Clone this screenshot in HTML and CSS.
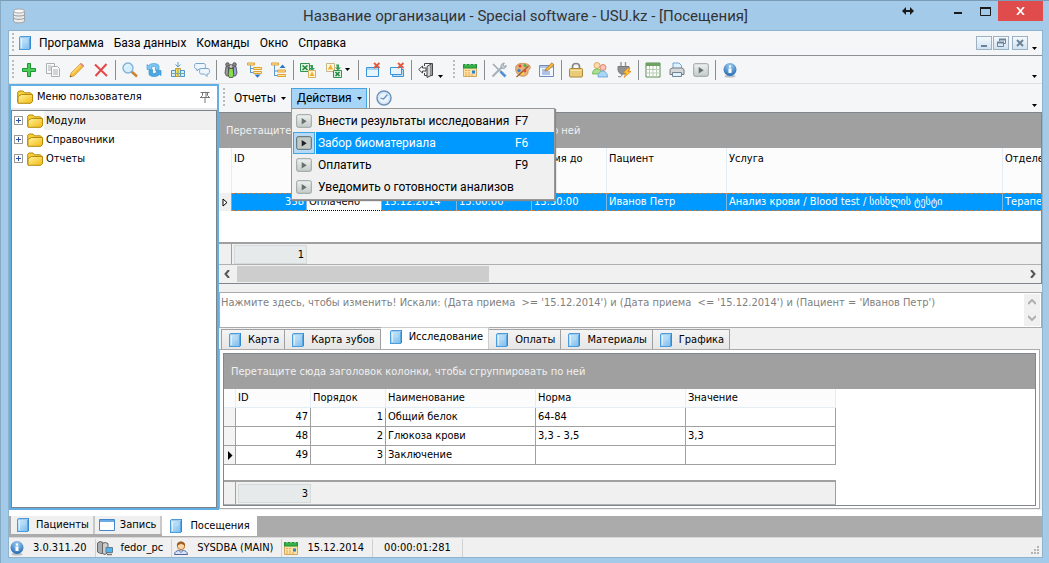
FILE: index.html
```html
<!DOCTYPE html>
<html lang="ru">
<head>
<meta charset="utf-8">
<title>Название организации - Special software - USU.kz - [Посещения]</title>
<link rel="stylesheet" href="styles.css">
</head>
<body>
<svg class="sprite" aria-hidden="true">
  <defs>
    <linearGradient id="gBook" x1="0" y1="0" x2="1" y2="1"><stop offset="0" stop-color="#d3ecfc"/><stop offset="1" stop-color="#7dbdee"/></linearGradient>
    <linearGradient id="gFold" x1="0" y1="0" x2="1" y2="1"><stop offset="0" stop-color="#fff3a0"/><stop offset="1" stop-color="#f2b90d"/></linearGradient>
    <linearGradient id="gPlay" x1="0" y1="0" x2="0" y2="1"><stop offset="0" stop-color="#eef1f0"/><stop offset="1" stop-color="#c3cbc9"/></linearGradient>
    <radialGradient id="gInfo" cx=".5" cy=".25" r=".8"><stop offset="0" stop-color="#9fd0f5"/><stop offset="1" stop-color="#1a62ad"/></radialGradient>
  </defs>
  <symbol id="book" viewBox="0 0 16 16"><path d="M2 2.500 3.500 1H14v12.500L12.500 15H2z" fill="#3488cf"/><path d="M2 3h10.500v11H2z" fill="url(#gBook)"/><path d="M3 2.300h10" stroke="#b9dff8"/><path d="M12.500 3v11" stroke="#5aa9e2"/><path d="M2.500 3v11.500h10" stroke="#4b9ddd" fill="none"/><path d="M4.500 4v9" stroke="#f0f9ff" opacity=".7"/><path d="M6 5h4v3H6z" fill="#b3dbf6"/></symbol>
  <symbol id="folder" viewBox="0 0 16 16"><path d="M.7 13.500V3.200L2 2h4l1.500 1.800h6l.8 1v2" fill="#f7cf3a" stroke="#b78a0a"/><path d="M1 14.300V7.500L4.500 5.500h11v7l-1.800 1.800z" fill="url(#gFold)" stroke="#b78a0a"/></symbol>
  <symbol id="play" viewBox="0 0 16 16"><rect x=".7" y="1.700" width="14.600" height="12.600" rx="1.500" fill="url(#gPlay)" stroke="#98a3a1"/><path d="M5.700 5v6.500l5-3.250z" fill="#66706e"/></symbol>
  <symbol id="playhot" viewBox="0 0 16 16"><rect x=".7" y="1.700" width="14.600" height="12.600" rx="1.500" fill="#c3cbc9" stroke="#5d6866"/><path d="M5.700 5v6.500l5-3.250z" fill="#222"/></symbol>
  <symbol id="info" viewBox="0 0 16 16"><ellipse cx="8" cy="14.300" rx="5.500" ry="1.300" fill="#b6bec6"/><circle cx="8" cy="7.500" r="6.500" fill="url(#gInfo)"/><path d="M6.500 6.500h3V11h-3zM7 3.500h2v2H7z" fill="#fff"/></symbol>
  <symbol id="cal" viewBox="0 0 16 16"><path d="M1.500 5h13v9.500h-13z" fill="#fbe3a4" stroke="#cfa85c"/><path d="M1.500 2.500h13V6h-13z" fill="#35b34a" stroke="#1f8a33"/><path d="M4 1v2M8 1v2M12 1v2" stroke="#e8f5e9"/><path d="M3 8.500h6M3 11h6M3 13h9" stroke="#f0a45c" stroke-dasharray="2 1"/><rect x="10" y="8.500" width="3" height="3" fill="#2f7fd0"/></symbol>
  <symbol id="db" viewBox="0 0 16 16"><path d="M2.500 3v10c0 2.500 11 2.500 11 0V3" fill="#ececec" stroke="#a3a3a3"/><ellipse cx="8" cy="3" rx="5.500" ry="2" fill="#fafafa" stroke="#aaa"/><path d="M2.500 6.500c0 2 11 2 11 0M2.500 9.800c0 2 11 2 11 0" fill="none" stroke="#999"/></symbol>
  <symbol id="add" viewBox="0 0 16 16"><path d="M6.500 1.500h3v5h5v3h-5v5h-3v-5h-5v-3h5z" fill="#4ccb5c" stroke="#1d9930"/></symbol>
  <symbol id="copy" viewBox="0 0 16 16"><g fill="#fafafa" stroke="#a9b0b0"><path d="M1.500 1.500h8v10h-8z"/><path d="M6.500 4.500h6l2 2v8h-8z"/></g><path d="M3 4h3M3 6h3M3 8h3M8 8h5M8 10h5M8 12h5" stroke="#a9b0b0"/></symbol>
  <symbol id="pen" viewBox="0 0 16 16"><path d="m1 15 1.200-4L12 1.200l2.800 2.800L5 13.800z" fill="#f9c13d" stroke="#cd8a20" stroke-width=".8"/><path d="m3 11.500 9.500-9.500" stroke="#ffe9a0"/><path d="m11 2.200 2.800 2.800 1.200-1.200L12.200 1z" fill="#e58a8a"/><path d="m1 15 1.500-.4-1-1z" fill="#333"/></symbol>
  <symbol id="del" viewBox="0 0 16 16"><path d="m2 2.500 12 11.500M13.500 2 2.500 14" stroke="#e54848" stroke-width="2" fill="none"/></symbol>
  <symbol id="find" viewBox="0 0 16 16"><path d="m9.500 9.500 5.500 5" stroke="#c98436" stroke-width="2.600"/><circle cx="6" cy="6" r="5" fill="#d4eefd" stroke="#7db4d8" stroke-width="1.400"/><path d="M3 5.500C3.500 3.500 5 3 6.500 3" stroke="#fff" fill="none"/></symbol>
  <symbol id="refresh" viewBox="0 0 16 16"><path d="M1 7.500V2.500l1.500 1C5 .8 11 .8 13 3.500V8h-3.500V5C8 4 6.500 4.500 5 6l1.500 1.500z" fill="#7cc3ee" stroke="#4ba3dc" stroke-width=".7"/><path d="M15 8.500v5l-1.500-1C11 15.200 5 15.200 3 12.500V8h3.500v3c1.500 1 3 .5 4.500-1L9.500 8.500z" fill="#4aa8e4" stroke="#3a93d0" stroke-width=".7"/></symbol>
  <symbol id="filter" viewBox="0 0 16 16"><path d="M8 0v4M5.500 2.500 8 5l2.500-2.500" stroke="#5b9bd0" fill="none"/><path d="M5.500 6.500h5v8h-5z" stroke="#c9992c" fill="#fbe04a"/><g stroke="#4c94cf" fill="#d9edfb"><path d="M1.500 8.500h4v6h-4zM10.500 8.500h4v6h-4z"/></g><path d="M1 11.500h14M8 6.500v8" stroke="#7fa6a0"/></symbol>
  <symbol id="chat" viewBox="0 0 16 16"><g fill="#eef6fd" stroke="#7ba6cc"><path d="M2 1.500h8c2 0 2 5.500 0 5.500H5L3 9V7H2C0 7 0 1.500 2 1.500z"/><path d="M7 6.500h7c2 0 2 5.500 0 5.500h-1v2.500L10.500 12H7c-2 0-2-5.500 0-5.500z"/></g></symbol>
  <symbol id="people" viewBox="0 0 16 16"><g stroke="#444" stroke-width=".8"><path d="M3 4.500 2 11l1.500 3h2V5z" fill="#9a9a9a"/><path d="M13 4.500 14 11l-1.500 3h-2V5z" fill="#9a9fe0"/><path d="M6 6.500h4l.8 6-1 3H6.200l-1-3z" fill="#8ade45"/><circle cx="4.500" cy="2.500" r="1.800" fill="#888"/><circle cx="11.500" cy="2.500" r="1.800" fill="#888"/><circle cx="8" cy="4.500" r="1.900" fill="#d0d0d0"/></g></symbol>
  <symbol id="treedn" viewBox="0 0 16 16"><path d="M3.500 3v8M4 6.500h3M4 10.500h3" stroke="#5b9bd0" fill="none"/><g fill="#fde7a5" stroke="#e0a030"><path d="M.5 1h7v2h-7zM6.500 5.500h8v2h-8zM6.500 9.500h8v2h-8z"/></g><path d="M7.500 12.500h6L10.500 15.700z" fill="#2b76c9"/></symbol>
  <symbol id="treeup" viewBox="0 0 16 16"><path d="M3.500 3v11M4 9h3M4 13.500h3" stroke="#5b9bd0" fill="none"/><g fill="#fde7a5" stroke="#e0a030"><path d="M.5 1h7v2h-7zM6.500 8h8v2h-8zM6.500 12.500h8v2h-8z"/></g><path d="M8.500 6h6l-3-3.500z" fill="#2b76c9"/></symbol>
  <symbol id="xls" viewBox="0 0 16 16"><path d="M.5 1.500h9v8h-9z" fill="#dff2df" stroke="#2f9650"/><path d="m2.500 3.500 5 4.500M7.500 3.500l-5 4.500" stroke="#23863f" stroke-width="1.600"/><path d="M10 3h3v3h2l-3 3-3-3h2z" fill="#35a052"/><path d="M8.500 8.500h7v7h-7z" fill="#fff8de" stroke="#d6b35c"/><path d="m12 9.500 2.500 4.500h-5z" fill="#f5ad2d"/></symbol>
  <symbol id="xls2" viewBox="0 0 16 16"><path d="M.5 1.500h8v8h-8z" fill="#fff8de" stroke="#c6b58c"/><path d="m4.500 2.500 2.800 5H1.700z" fill="#f5ad2d"/><path d="M10 2.500h3v3h2l-3 3-3-3h2z" fill="#35a052"/><path d="M7.500 8.500h8v7h-8z" fill="#dff2df" stroke="#2f9650"/><path d="m9.500 10 4 4M13.500 10l-4 4" stroke="#23863f" stroke-width="1.600"/></symbol>
  <symbol id="winx" viewBox="0 0 16 16"><path d="M1.500 5.500h12v9h-12z" fill="#e6f4fe" stroke="#3b93d8"/><path d="M2 6h11v2H2z" fill="#a9d5f5"/><path d="m9 1 5.500 5M14.500 1 9 6" stroke="#e2593d" stroke-width="1.800"/></symbol>
  <symbol id="winsx" viewBox="0 0 16 16"><path d="M3.500 7.500h11v7h-11z" fill="#bcdff7" stroke="#3b93d8"/><path d="M1.500 5.500h11v7h-11z" fill="#e6f4fe" stroke="#3b93d8"/><path d="m9 1 5.500 5M14.500 1 9 6" stroke="#e2593d" stroke-width="1.800"/></symbol>
  <symbol id="exit" viewBox="0 0 16 16"><path d="M6.500 4V1.500h8v12H12M6.500 11v2.500H9" fill="none" stroke="#444"/><path d="m9 4.500 4-2.500v11.500L9 15.500z" fill="#d5d5d5" stroke="#444"/><path d="M.7 7.500 4.500 4v2h3.500v3H4.500v2z" fill="#fff" stroke="#444"/></symbol>
  <symbol id="tools" viewBox="0 0 16 16"><path d="M2 2l8 8" stroke="#98a4ad" stroke-width="1.500"/><path d="m9.500 9.500 5 5" stroke="#4f93d3" stroke-width="2.600"/><path d="m1.500 14.500 9-9" stroke="#a5afb6" stroke-width="2"/><path d="M10 5.500c-.5-3 1.500-4.500 3.500-4.500l-1.500 2 1 1.300 2.300-.8C15.500 6 13 7 11 6.300z" fill="#c6ced4" stroke="#87929a" stroke-width=".7"/></symbol>
  <symbol id="palette" viewBox="0 0 16 16"><path d="M1 4c3-4 12-3 14 0 1 4-2 3-2 6s-3 5-7 4c-5-1-6-7-5-10z" fill="#e9b27a" stroke="#cf975e"/><circle cx="5" cy="4" r="1.600" fill="#db4b3b"/><circle cx="10" cy="3.500" r="1.500" fill="#4eae50"/><circle cx="4" cy="8.500" r="1.700" fill="#3f86d9"/><circle cx="7.500" cy="11.500" r="1.600" fill="#f2d43a"/><path d="m1.500 15 12-11" stroke="#9a6034" stroke-width="1.300"/><circle cx="10" cy="9" r="1.400" fill="#e14f39"/></symbol>
  <symbol id="formedit" viewBox="0 0 16 16"><path d="M.5 3.500h14v11H.5z" fill="#f2f7fd" stroke="#7389c0"/><path d="M1 4h13v2H1z" fill="#b3c6ea"/><path d="M3 8h4M3 10h8M3 12h8" stroke="#6d8fd0"/><path d="m6 9 1-2.500L13 .8l2 2-6 5.500z" fill="#f5b63a" stroke="#a06d1c" stroke-width=".7"/></symbol>
  <symbol id="lock" viewBox="0 0 16 16"><path d="M4.500 7V4.500c0-4 7-4 7 0V7" fill="none" stroke="#878787" stroke-width="1.700"/><rect x="1.500" y="6.500" width="13" height="8.500" rx="1" fill="#ebcb77" stroke="#ad883a"/><path d="M2.500 8.500h11" stroke="#f9e8ae"/></symbol>
  <symbol id="users" viewBox="0 0 16 16"><g stroke-width=".8"><circle cx="5" cy="3.500" r="3" fill="#fbdcae" stroke="#dc9a4e"/><path d="M.5 12c0-7 9-7 9 0z" fill="#a8e08e" stroke="#66b34b"/><circle cx="11" cy="5.500" r="3" fill="#f7c6b8" stroke="#dc6d52"/><path d="M6 15c0-8 9.500-8 9.500 0z" fill="#a9d6f7" stroke="#5c9fd6"/></g></symbol>
  <symbol id="plug" viewBox="0 0 16 16"><path d="M5 0v5M9.500 0v5" stroke="#999" stroke-width="1.400"/><path d="M2 4.500h11v3c0 4-3 4.500-4.500 4.500H6C4 12 2 10 2 7.500z" fill="#909090" stroke="#777"/><path d="M6 12c0 3-2 3-4 2.500" stroke="#777" fill="none"/><path d="m12 6-5 5h3l-2 4.500L15 9.500h-3l2-3.500z" fill="#ffc42e" stroke="#e1841c" stroke-width=".7"/></symbol>
  <symbol id="table" viewBox="0 0 16 16"><path d="M1 1h14v14H1z" fill="#fff" stroke="#5d8a55"/><path d="M1 1h14v3H1z" fill="#6da262"/><path d="M1 7.500h14M1 11h14M4.500 4v11M8 4v11M11.500 4v11" stroke="#b6cdb2"/></symbol>
  <symbol id="print" viewBox="0 0 16 16"><path d="M4 7V1h6l2.500 2.500V7" fill="#e0f0fd" stroke="#6ea6d5"/><path d="M1 7.500 3 6h10l2 1.500v5H1z" fill="#d5d8da" stroke="#74797d"/><path d="M3.500 10.500h9v4h-9z" fill="#e0f0fd" stroke="#72848f"/></symbol>
  <symbol id="gauge" viewBox="0 0 16 16"><circle cx="8" cy="8" r="7" fill="#eaf3fa" stroke="#6d93bb" stroke-width="1.500"/><path d="m4.500 8 3 1L11.500 4.500" fill="none" stroke="#5c8fc4" stroke-width="1.200"/><circle cx="8" cy="8" r="5.300" fill="none" stroke="#bdd4e9" stroke-width=".7"/></symbol>
  <symbol id="pin" viewBox="0 0 12 12"><path d="M1.500 1.500h9M3.500 1.500v3l-2 2M8.500 1.500v3l2 2M7 1.500v5M1 6.500h10M6 7v5" fill="none" stroke="#777"/></symbol>
  <symbol id="window" viewBox="0 0 16 16"><path d="M.5 2.500h15v11H.5z" fill="#fff" stroke="#4387ca"/><path d="M1 3h14v2H1z" fill="#6cabe2"/></symbol>
  <symbol id="server" viewBox="0 0 16 16"><path d="M.5 3 3 1.500l3 1v11L3.500 13.500.5 12z" fill="#a9adb0" stroke="#666"/><path d="M5.500 3.500 8 2.500l3 1v9l-3 2-2.500-1z" fill="#c9cdd0" stroke="#666"/><path d="M9 7.500h6.500v5H9z" fill="#4fb4ee" stroke="#5f7d92"/><path d="M10 14.500h5" stroke="#777" stroke-width="1.500"/></symbol>
  <symbol id="user" viewBox="0 0 16 16"><path d="M1.500 14.500c0-3 3-4 4-4h5c1 0 4 1 4 4z" fill="#d8e3f8" stroke="#50659c"/><circle cx="8" cy="6" r="3.700" fill="#fbd6a4" stroke="#b8793a"/><path d="M4 6C3 0 13 0 12 6c-1-2-3-1-4-2.500C7 5 5 4.500 4 6z" fill="#9b5a20"/><path d="m6 10.500 2 2 2-2" fill="#fff" stroke="#50659c"/></symbol>
  <symbol id="caret" viewBox="0 0 5 3"><path d="M0 0h5L2.500 3z"/></symbol>
</svg>

<div class="window">
  <header class="titlebar">
    <svg class="icon"><use href="#db"/></svg>
    <h1 class="title">Название организации - Special software - USU.kz - [Посещения]</h1>
    <div class="winbtns">
      <button class="wb wb-size" aria-label="Размер"><svg width="12" height="8"><path d="M1 4h10" stroke="#1a1a1a" stroke-width="2"/><path d="M4 0v8L0 4zM8 0v8l4-4z" fill="#1a1a1a"/></svg></button>
      <button class="wb wb-min" aria-label="Свернуть"><svg width="10" height="8"><path d="M1 6h8" stroke="#1a1a1a" stroke-width="2"/></svg></button>
      <button class="wb wb-max" aria-label="Развернуть"><svg width="11" height="9"><path d="M.5.500h10v8H.5z" fill="none" stroke="#1a1a1a"/><path d="M0 1h11" stroke="#1a1a1a" stroke-width="2"/></svg></button>
      <button class="wb wb-close" aria-label="Закрыть"><svg width="9" height="8"><path d="m1 0 7 8M8 0 1 8" stroke="#fff" stroke-width="1.700"/></svg></button>
    </div>
  </header>

  <div class="client">
    <nav class="menubar">
      <span class="grip"></span>
      <svg class="icon"><use href="#book"/></svg>
      <button class="menu">Программа</button>
      <button class="menu">База данных</button>
      <button class="menu">Команды</button>
      <button class="menu">Окно</button>
      <button class="menu">Справка</button>
      <div class="mdi">
        <button aria-label="Свернуть окно"><svg width="14" height="12"><path d="M4 9h6" stroke="#6c8497" stroke-width="2"/></svg></button>
        <button aria-label="Восстановить окно"><svg width="14" height="12"><path d="M5.500 4V2.500h6v4H10M3.500 5.500h6v4h-6z" fill="none" stroke="#6c8497"/><path d="M5 2.500h7M3 5.500h7" stroke="#6c8497" stroke-width="2"/></svg></button>
        <button class="mdi-close" aria-label="Закрыть окно"><svg width="14" height="12"><path d="m4 3 6 6M10 3 4 9" stroke="#6c8497" stroke-width="2"/></svg></button>
      </div>
      <svg class="caret low"><use href="#caret"/></svg>
    </nav>

    <div class="toolbar">
      <span class="grip"></span>
      <button class="tb" aria-label="Добавить"><svg class="icon"><use href="#add"/></svg></button>
      <button class="tb" aria-label="Копировать"><svg class="icon"><use href="#copy"/></svg></button>
      <button class="tb" aria-label="Изменить"><svg class="icon"><use href="#pen"/></svg></button>
      <button class="tb" aria-label="Удалить"><svg class="icon"><use href="#del"/></svg></button>
      <span class="sep"></span>
      <button class="tb" aria-label="Найти"><svg class="icon"><use href="#find"/></svg></button>
      <button class="tb" aria-label="Обновить"><svg class="icon"><use href="#refresh"/></svg></button>
      <button class="tb" aria-label="Ширина колонок"><svg class="icon"><use href="#filter"/></svg></button>
      <button class="tb" aria-label="Сообщения"><svg class="icon"><use href="#chat"/></svg></button>
      <span class="sep"></span>
      <button class="tb" aria-label="Клиенты"><svg class="icon"><use href="#people"/></svg></button>
      <button class="tb" aria-label="Развернуть всё"><svg class="icon"><use href="#treedn"/></svg></button>
      <button class="tb" aria-label="Свернуть всё"><svg class="icon"><use href="#treeup"/></svg></button>
      <span class="sep"></span>
      <button class="tb" aria-label="Импорт"><svg class="icon"><use href="#xls"/></svg></button>
      <button class="tb tb-drop" aria-label="Экспорт"><svg class="icon"><use href="#xls2"/></svg><svg class="caret"><use href="#caret"/></svg></button>
      <span class="sep"></span>
      <button class="tb" aria-label="Закрыть вкладку"><svg class="icon"><use href="#winx"/></svg></button>
      <button class="tb" aria-label="Закрыть все вкладки"><svg class="icon"><use href="#winsx"/></svg></button>
      <span class="sep"></span>
      <button class="tb" aria-label="Выход"><svg class="icon"><use href="#exit"/></svg></button>
      <svg class="caret low"><use href="#caret"/></svg>
      <span class="grip grip-mid"></span>
      <button class="tb" aria-label="Календарь"><svg class="icon"><use href="#cal"/></svg></button>
      <span class="sep"></span>
      <button class="tb" aria-label="Настройки"><svg class="icon"><use href="#tools"/></svg></button>
      <button class="tb" aria-label="Оформление"><svg class="icon"><use href="#palette"/></svg></button>
      <button class="tb" aria-label="Форма"><svg class="icon"><use href="#formedit"/></svg></button>
      <span class="sep"></span>
      <button class="tb" aria-label="Блокировка"><svg class="icon"><use href="#lock"/></svg></button>
      <button class="tb" aria-label="Пользователи"><svg class="icon"><use href="#users"/></svg></button>
      <button class="tb" aria-label="Подключение"><svg class="icon"><use href="#plug"/></svg></button>
      <span class="sep"></span>
      <button class="tb" aria-label="Таблица"><svg class="icon"><use href="#table"/></svg></button>
      <button class="tb" aria-label="Печать"><svg class="icon"><use href="#print"/></svg></button>
      <button class="tb" aria-label="Запуск"><svg class="icon"><use href="#play"/></svg></button>
      <span class="sep"></span>
      <button class="tb" aria-label="О программе"><svg class="icon"><use href="#info"/></svg></button>
      <svg class="caret low end"><use href="#caret"/></svg>
    </div>

    <div class="work">
      <aside class="side">
        <div class="side-head">
          <svg class="icon"><use href="#folder"/></svg><span>Меню пользователя</span>
          <button class="pin" aria-label="Закрепить"><svg width="12" height="12"><use href="#pin"/></svg></button>
        </div>
        <ul class="tree">
          <li><button class="plus" aria-label="Раскрыть"></button><svg class="icon"><use href="#folder"/></svg><span class="node current">Модули</span></li>
          <li><button class="plus" aria-label="Раскрыть"></button><svg class="icon"><use href="#folder"/></svg><span class="node">Справочники</span></li>
          <li><button class="plus" aria-label="Раскрыть"></button><svg class="icon"><use href="#folder"/></svg><span class="node">Отчеты</span></li>
        </ul>
      </aside>

      <main class="main">
        <div class="subbar">
          <span class="grip"></span>
          <button class="drop">Отчеты <svg class="caret"><use href="#caret"/></svg></button>
          <div class="drop-wrap">
            <button class="drop open">Действия <svg class="caret"><use href="#caret"/></svg></button>
            <div class="popup" role="menu">
              <button class="item" role="menuitem"><span class="cell"><svg class="icon"><use href="#play"/></svg></span><span class="label">Внести результаты исследования</span><span class="key">F7</span></button>
              <button class="item hot" role="menuitem"><span class="cell"><svg class="icon"><use href="#playhot"/></svg></span><span class="label">Забор биоматериала</span><span class="key">F6</span></button>
              <button class="item" role="menuitem"><span class="cell"><svg class="icon"><use href="#play"/></svg></span><span class="label">Оплатить</span><span class="key">F9</span></button>
              <button class="item" role="menuitem"><span class="cell"><svg class="icon"><use href="#play"/></svg></span><span class="label">Уведомить о готовности анализов</span></button>
            </div>
          </div>
          <span class="sep"></span>
          <button class="tb" aria-label="Время"><svg class="icon"><use href="#gauge"/></svg></button>
          <svg class="caret low end"><use href="#caret"/></svg>
        </div>

        <section class="grid visits">
          <div class="group">Перетащите сюда заголовок колонки, чтобы сгруппировать по ней</div>
          <div class="clip">
            <table class="t-visits">
              <colgroup><col class="c-ind"><col class="c-s"><col class="c-s"><col class="c-s"><col class="c-s"><col class="c-s"><col class="c-pat"><col class="c-srv"><col class="c-dep"></colgroup>
              <thead><tr><th></th><th>ID</th><th>Статус</th><th>Дата приема</th><th>Время с</th><th>Время до</th><th>Пациент</th><th>Услуга</th><th>Отделение</th></tr></thead>
              <tbody><tr><td class="ind"><svg width="6" height="9"><path d="m1 1 4 3.500L1 8z" fill="#fff" stroke="#000"/></svg></td><td class="num">358</td><td class="focus">Оплачено</td><td>15.12.2014</td><td>13:00:00</td><td>13:30:00</td><td>Иванов Петр</td><td>Анализ крови / Blood test / სისხლის ტესტი</td><td>Терапевтическое</td></tr></tbody>
            </table>
          </div>
          <div class="foot"><span class="foot-ind"></span><output class="sum">1</output></div>
          <div class="hscroll">
            <button aria-label="Влево"><svg width="6" height="8"><path d="M5 0 1.500 4 5 8" fill="none" stroke="#555" stroke-width="2"/></svg></button>
            <div class="track"><div class="thumb"></div></div>
            <button aria-label="Вправо"><svg width="6" height="8"><path d="m1 0 3.500 4L1 8" fill="none" stroke="#555" stroke-width="2"/></svg></button>
          </div>
        </section>

        <div class="search">
          <textarea class="memo" aria-label="Условия поиска" readonly>Нажмите здесь, чтобы изменить! Искали: (Дата приема  &gt;= '15.12.2014') и (Дата приема  &lt;= '15.12.2014') и (Пациент = 'Иванов Петр')</textarea>
          <div class="vscroll">
            <button aria-label="Вверх"><svg width="8" height="6"><path d="m0 5 4-4 4 4" fill="none" stroke="#b0b0b0" stroke-width="2"/></svg></button>
            <button aria-label="Вниз"><svg width="8" height="6"><path d="m0 1 4 4 4-4" fill="none" stroke="#b0b0b0" stroke-width="2"/></svg></button>
          </div>
        </div>

        <div class="tabs" role="tablist">
          <button class="tab" role="tab"><svg class="icon"><use href="#book"/></svg>Карта</button>
          <button class="tab" role="tab"><svg class="icon"><use href="#book"/></svg>Карта зубов</button>
          <button class="tab on" role="tab" aria-selected="true"><svg class="icon"><use href="#book"/></svg>Исследование</button>
          <button class="tab" role="tab"><svg class="icon"><use href="#book"/></svg>Оплаты</button>
          <button class="tab" role="tab"><svg class="icon"><use href="#book"/></svg>Материалы</button>
          <button class="tab" role="tab"><svg class="icon"><use href="#book"/></svg>Графика</button>
        </div>

        <div class="page">
          <section class="grid research">
            <div class="group">Перетащите сюда заголовок колонки, чтобы сгруппировать по ней</div>
            <table class="t-res">
              <colgroup><col class="c-ind2"><col class="c-s"><col class="c-s"><col class="c-m"><col class="c-m"><col class="c-m"></colgroup>
              <thead><tr><th></th><th>ID</th><th>Порядок</th><th>Наименование</th><th>Норма</th><th>Значение</th></tr></thead>
              <tbody>
                <tr><td class="ind"></td><td class="num">47</td><td class="num">1</td><td>Общий белок</td><td>64-84</td><td></td></tr>
                <tr><td class="ind"></td><td class="num">48</td><td class="num">2</td><td>Глюкоза крови</td><td>3,3 - 3,5</td><td>3,3</td></tr>
                <tr><td class="ind"><svg width="6" height="9"><path d="m1 0 4.500 4.500L1 9z"/></svg></td><td class="num">49</td><td class="num">3</td><td>Заключение</td><td></td><td></td></tr>
              </tbody>
            </table>
            <div class="foot"><span class="foot-ind"></span><output class="sum">3</output></div>
          </section>
        </div>
      </main>
    </div>

    <div class="wintabs" role="tablist">
      <button class="wtab" role="tab"><svg class="icon"><use href="#book"/></svg>Пациенты</button>
      <button class="wtab" role="tab"><svg class="icon"><use href="#window"/></svg>Запись</button>
      <button class="wtab on" role="tab" aria-selected="true"><svg class="icon"><use href="#book"/></svg>Посещения</button>
    </div>

    <footer class="status">
      <span class="st"><svg class="icon"><use href="#info"/></svg>3.0.311.20</span>
      <span class="st"><svg class="icon"><use href="#server"/></svg>fedor_pc</span>
      <span class="st"><svg class="icon"><use href="#user"/></svg>SYSDBA (MAIN)</span>
      <span class="st"><svg class="icon"><use href="#cal"/></svg>15.12.2014</span>
      <span class="st st-time">00:00:01:281</span>
      <svg class="sizer" width="9" height="9"><path d="M6 0h2v2H6zM3 3h2v2H3zM6 3h2v2H6zM0 6h2v2H0zM3 6h2v2H3zM6 6h2v2H6z" fill="#b5b5b5"/></svg>
    </footer>
  </div>
</div>
</body>
</html>
```

FILE: styles.css
```css
:root {
  --ui: Roboto, "Noto Sans", sans-serif;
  --grid: "DejaVu Sans Condensed", "DejaVu Sans", sans-serif;
  --sky: #a3cae9;
  --line: #a0a0a0;
  --hot: #0099ff;
}
* { box-sizing: border-box; }
body {
  margin: 0;
  font: 11px/14px var(--grid);
  color: #000;
}
button {
  margin: 0;
  padding: 0;
  border: 0;
  background: none;
  color: inherit;
  font: inherit;
  white-space: nowrap;
}
.sprite { position: absolute; width: 0; height: 0; }
.icon { width: 16px; height: 16px; flex: none; display: block; }
.caret { width: 5px; height: 3px; flex: none; }
.caret.low { align-self: flex-end; margin-bottom: 5px; }
.end { margin-left: auto; }

.window {
  display: flex;
  flex-direction: column;
  min-height: 100vh;
  padding: 0 6px 6px 7px;
  background: var(--sky);
  border-top: 1px solid #7b9cb6;
  border-left: 1px solid #86a9c4;
}
.titlebar {
  display: flex;
  align-items: center;
  height: 29px;
  padding-left: 3px;
}
.title {
  flex: 1;
  margin: 0 0 0 152px;
  text-align: center;
  font: 15px/20px var(--ui);
  color: #333;
  white-space: nowrap;
}
.winbtns { display: flex; align-self: flex-start; }
.wb { display: flex; height: 20px; align-items: center; justify-content: center; }
.wb-size { width: 72px; }
.wb-min { width: 28px; }
.wb-max { width: 26px; }
.wb-close { width: 45px; background: #e04c4c; }

.client {
  display: flex;
  flex-direction: column;
  flex: 1;
  border: 1px solid #8fb2cd;
  background: #f0f0f0;
}
.grip {
  flex: none;
  width: 2px;
  height: 20px;
  background: repeating-linear-gradient(#bbb 0 2px, transparent 2px 4px);
}
.menubar, .toolbar, .subbar {
  display: flex;
  align-items: center;
  padding: 0 5px 0 3px;
  background: #f5f6f7;
}
.menubar {
  height: 25px;
  gap: 10px;
  border-bottom: 1px solid #8d9094;
  font: 12px/16px var(--ui);
}
.menubar .grip { margin-right: -7px; }
.menubar .icon { margin-right: -4px; }
.mdi { display: flex; margin-left: auto; margin-right: -6px; gap: 1px; }
.mdi button {
  display: flex;
  width: 16px;
  height: 14px;
  border: 1px solid #9cb2c4;
  background: linear-gradient(#f4f9fd, #cfe2f1);
}
.mdi .mdi-close { margin-left: 2px; }

.toolbar { height: 28px; border-bottom: 1px solid #dfe0e1; }
.toolbar .grip, .subbar .grip { margin-right: 3px; }
.tb { display: flex; width: 24px; height: 24px; align-items: center; justify-content: center; }
.tb-drop { width: 36px; gap: 3px; }
.sep { flex: none; width: 1px; height: 20px; margin: 0 2px; background: #8a8d90; }
.toolbar .grip-mid { margin: 0 3px 0 10px; }

.work { display: flex; flex: 1; }
.side {
  display: flex;
  flex-direction: column;
  width: 210px;
  border: 2px solid #63aee4;
  background: #e8e9ea;
}
.side-head {
  display: flex;
  align-items: center;
  gap: 4px;
  height: 22px;
  margin-bottom: 2px;
  padding: 0 6px;
  background: #fff;
}
.pin { margin-left: auto; }
.pin svg { display: block; }
.tree {
  flex: 1;
  margin: 0;
  padding: 0;
  border: 1px solid #7d8389;
  background: #fff;
  list-style: none;
}
.tree li { display: flex; align-items: center; height: 19px; padding-left: 2px; }
.tree .icon { margin-left: 4px; }
.plus {
  width: 9px;
  height: 9px;
  border: 1px solid #9a9a9a;
  background:
    linear-gradient(#2f4fa0, #2f4fa0) center / 5px 1px no-repeat,
    linear-gradient(#2f4fa0, #2f4fa0) center / 1px 5px no-repeat,
    #fff;
}
.node { flex: 1; margin-left: 1px; padding: 2px; line-height: 15px; }
.node.current { background: #f0f0f0; }

.main { display: flex; flex: 1; flex-direction: column; min-width: 0; }
.subbar { height: 28px; padding-left: 4px; font: 12px/16px var(--ui); }
.drop { display: flex; align-items: center; gap: 5px; height: 21px; padding: 0 5px 0 6px; }
.drop-wrap { position: relative; }
.drop.open { padding: 0 4px 0 5px; border: 1px solid #45a3e0; background: #a6d5f7; }
.popup {
  position: absolute;
  z-index: 2;
  top: 20px;
  left: 0;
  width: 264px;
  padding: 1px 0 1px 1px;
  border: 1px solid #979797;
  background: #f0f0f0;
  box-shadow: 1px 1px 1px #888;
}
.item { display: flex; width: 100%; height: 22px; align-items: center; text-align: left; }
.cell { display: flex; width: 22px; height: 22px; align-items: center; justify-content: center; border: 1px solid transparent; }
.hot .cell { border-color: #45a3e0; background: #b5daf5; }
.label, .key { height: 22px; line-height: 22px; }
.label { flex: 1; margin-left: 1px; padding-left: 2px; }
.key { width: 39px; }
.hot .label, .hot .key { background: var(--hot); color: #fff; }

.grid { background: #fff; border: 1px solid #80868c; }
.visits { border-left-width: 0; }
.group { height: 35px; padding: 11px 7px; background: var(--line); color: #f0f0f0; white-space: nowrap; overflow: hidden; }
.clip { height: 94px; overflow: hidden; }
table { border-collapse: separate; border-spacing: 0; table-layout: fixed; }
th, td { overflow: hidden; padding: 0 2px; font-weight: normal; text-align: left; white-space: nowrap; }
td.num { text-align: right; }
.c-ind { width: 13px; }
.c-ind2 { width: 12px; }
.c-s { width: 75px; }
.c-m { width: 150px; }
.c-pat { width: 120px; }
.c-srv { width: 276px; }
.c-dep { width: 100px; }
.t-visits { width: 884px; }
.t-visits th { height: 45px; padding: 3px 2px 0; vertical-align: top; line-height: 15px; background: #fcfcfc; border-right: 1px solid #e2edf5; }
.t-visits td { height: 18px; background: var(--hot); color: #fff; border: 1px dashed #d07a30; border-width: 1px 0; border-right: 1px solid #7fb8e2; }
.t-visits td.ind { padding: 0 3px; background: #f0f0f0; border: 0; border-right: 1px solid var(--line); }
.t-visits td.focus { background: #fff; color: #000; border-bottom: 1px dotted #000; }
.ind svg { display: block; margin: auto; }
.foot { display: flex; align-items: center; height: 23px; background: #f0f0f0; border-top: 2px solid var(--line); border-bottom: 1px solid #b0b0b0; }
.foot-ind { align-self: stretch; width: 13px; border-right: 1px solid var(--line); }
.sum { width: 73px; height: 19px; margin-left: 2px; padding: 1px 2px; border: 1px solid #d5dada; background: #e6eaea; line-height: 16px; text-align: right; }
.hscroll { display: flex; align-items: center; height: 18px; padding: 0 5px; background: #f0f0f0; }
.hscroll button { display: flex; }
.track { flex: 1; margin: 0 7px; height: 16px; }
.thumb { width: 32%; height: 100%; background: #cdcdcd; }

.search { display: flex; margin-top: 8px; height: 36px; border: 1px solid #ababab; background: #fff; }
.memo { flex: 1; min-width: 0; margin: 0; padding: 2px 1px; border: 0; resize: none; outline: 0; background: none; color: #7f7f7f; font: inherit; line-height: 15px; overflow: hidden; white-space: pre-wrap; }
.vscroll { display: flex; flex-direction: column; justify-content: space-around; width: 16px; margin: 1px; background: #f0f0f0; align-items: center; }
.vscroll button { display: flex; }

.tabs { display: flex; align-items: flex-end; height: 21px; padding-left: 2px; }
.tab { display: flex; align-items: center; gap: 5px; height: 20px; padding: 0 5px; border: 1px solid var(--line); border-bottom: 0; background: linear-gradient(#f4f4f4, #e6e6e6); }
.tab + .tab { border-left: 0; }
.tab.on { height: 22px; padding: 0 5px 3px 7px; background: #fff; border-color: #ccc; }
.page { display: flex; flex: 1; padding: 3px 3px 2px; border: 1px solid #ababab; margin: 0 2px 1px 0; background: #fff; }
.research { flex: 1; min-width: 0; }
.t-res { width: 612px; }
.t-res th { height: 19px; background: #fcfcfc; border-right: 1px solid #e2edf5; border-bottom: 1px solid #e2edf5; }
.t-res td { height: 19px; border-right: 1px solid var(--line); border-bottom: 1px solid var(--line); }
.t-res td.ind { padding: 0 2px; background: #f4f4f4; }
.research .foot { width: 612px; height: 25px; margin-top: 15px; border-right: 1px solid var(--line); }
.research .foot-ind { width: 12px; }

.wintabs {
  display: flex;
  align-items: flex-start;
  height: 27px;
  padding: 6px 0 0 2px;
  background: linear-gradient(#fff 0 6px, #ababab 6px);
}
.wtab { display: flex; align-items: center; gap: 5px; height: 18px; padding: 0 4px; background: #f0f0f0; border-right: 2px solid #c8c8c8; }
.wtab.on { height: 20px; padding: 0 7px 0 6px; gap: 6px; background: #fff; border: 0; }
.status { display: flex; align-items: center; height: 20px; background: #f0f0f0; border-top: 1px solid #d8d8d8; }
.st { display: flex; align-items: center; gap: 8px; height: 18px; padding: 0 8px 0 0; border-right: 1px solid #d0d0d0; }
.st + .st { padding-left: 1px; }
.st.st-time { padding: 0 11px; }
.sizer { align-self: flex-end; margin: 0 2px 2px auto; }
```
